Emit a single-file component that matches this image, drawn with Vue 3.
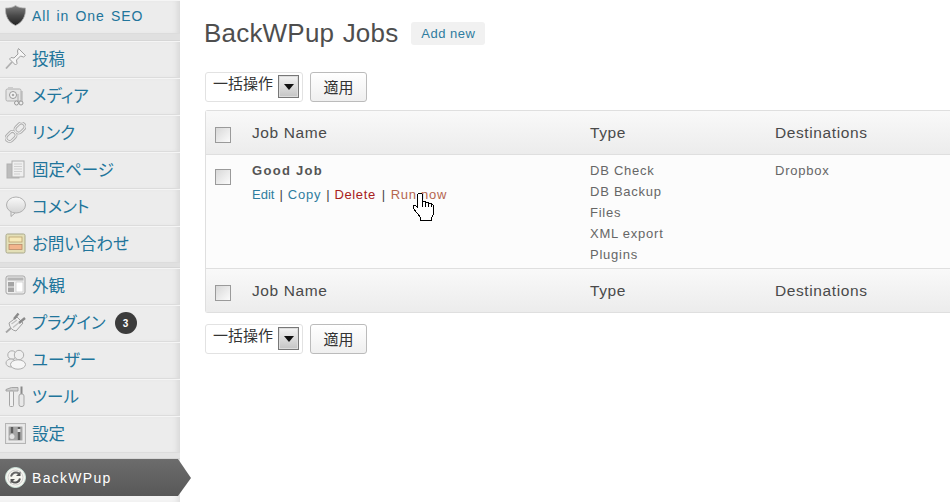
<script setup>
const shield = `<defs><linearGradient id="sg" x1="0" y1="0" x2="0" y2="1"><stop offset="0" stop-color="#808080"/><stop offset=".5" stop-color="#4a4a4a"/><stop offset="1" stop-color="#222"/></linearGradient></defs><path d="M10.5 .5 C13 2.500 17 3 20.500 3 C21 11 17.500 17.500 10.500 20.500 C3.500 17.500 0 11 .5 3 C4 3 8 2.500 10.500 .5Z" fill="url(#sg)" stroke="#b5b5b5" stroke-width=".8"/>`
const icons = {
  pin: `<path d="M13.500 .5 L20.500 7.500 L18.500 9 L15.500 8 L11.500 12 L12 15.500 L10.500 17 L4.500 11 L6 9.500 L9 10 L13 6 L12.500 3Z" fill="#f6f6f6" stroke="#a0a0a0"/><path d="M7 14 L1 20.500" stroke="#b0b0b0" stroke-width="1.800"/>`,
  media: `<rect x="1" y="4" width="15" height="12" rx="1.500" fill="#e4e4e4" stroke="#b0b0b0"/><rect x="3" y="2" width="5" height="2" fill="#ccc"/><circle cx="8" cy="10" r="3.500" fill="#f4f4f4" stroke="#999"/><circle cx="8" cy="10" r="1.300" fill="#aaa"/><path d="M17 6 V17 M13 9 L13 18" stroke="#aaa"/><circle cx="11.500" cy="18" r="2" fill="#eee" stroke="#999"/><circle cx="16" cy="18" r="2" fill="#eee" stroke="#999"/>`,
  link: `<g fill="none" stroke="#aeaeae" stroke-width="3"><rect x="9.500" y="2.500" width="11" height="7" rx="3.400" transform="rotate(-45 15 6)"/><rect x=".5" y="11" width="11" height="7" rx="3.400" transform="rotate(-45 6 14.500)"/></g><g fill="none" stroke="#f2f2f2"><rect x="9.500" y="2.500" width="11" height="7" rx="3.400" transform="rotate(-45 15 6)"/><rect x=".5" y="11" width="11" height="7" rx="3.400" transform="rotate(-45 6 14.500)"/></g>`,
  page: `<rect x="2" y="5" width="12" height="14" fill="#bcbcbc" stroke="#b0b0b0"/><rect x="7" y="2" width="12" height="16" fill="#efefef" stroke="#b0b0b0"/><path d="M9 5h8M9 7.500h8M9 10h8M9 12.500h8M9 15h6" stroke="#cfcfcf"/>`,
  comment: `<defs><linearGradient id="cg" x1="0" y1="0" x2="0" y2="1"><stop offset="0" stop-color="#fafafa"/><stop offset="1" stop-color="#d4d4d4"/></linearGradient></defs><path d="M6 15.500 L6 20.500 L10.500 16.500" fill="#ececec" stroke="#a8a8a8"/><ellipse cx="11" cy="9" rx="9.500" ry="8" fill="url(#cg)" stroke="#b0b0b0"/>`,
  form: `<rect x="1" y="1" width="19" height="19" rx="1.500" fill="#e4e0b8" stroke="#a8a88c"/><rect x="4" y="4" width="13" height="5" fill="#f6e9b8" stroke="#b8a070" stroke-width=".8"/><rect x="4" y="11.500" width="13" height="5" fill="#f2b48c" stroke="#b88a6a" stroke-width=".8"/>`,
  look: `<rect x="1" y="1" width="19" height="18" rx="2" fill="#efefef" stroke="#a5a5a5"/><rect x="2.500" y="2.500" width="16" height="3" fill="#b5b5b5"/><rect x="3" y="7" width="6" height="4.500" fill="#a5a5a5"/><rect x="3" y="12.500" width="6" height="4.500" fill="#a5a5a5"/><rect x="11" y="7" width="7" height="10" fill="#fff" stroke="#c0c0c0" stroke-width=".6"/>`,
  plugin: `<path d="M1 20.500 L6 16" stroke="#a5a5a5" stroke-width="1.800"/><path d="M4 11 L12 5 L18 11 L11 19 Q5 18 4 11Z" fill="#f0f0f0" stroke="#a0a0a0"/><path d="M9 7 L13.500 1.500 M14 11 L20 6" stroke="#8a8a8a" stroke-width="2.400"/><path d="M6.500 12 L12 8 M8 15.500 L14 10.500" stroke="#c0c0c0" stroke-width="1.400"/>`,
  users: `<circle cx="7" cy="6" r="4.200" fill="#efefef" stroke="#adadad"/><circle cx="14" cy="6" r="4.700" fill="#efefef" stroke="#adadad"/><ellipse cx="6" cy="14" rx="5" ry="4" fill="#eee" stroke="#adadad"/><ellipse cx="13" cy="15.500" rx="7.500" ry="4.700" fill="#f6f6f6" stroke="#adadad"/>`,
  tools: `<path d="M1 3.500 Q6 .5 13 1.500 V5 H8.500 H1Z" fill="#cfcfcf" stroke="#a5a5a5"/><rect x="4.500" y="5" width="4" height="15.500" rx="1" fill="#f0f0f0" stroke="#a5a5a5"/><path d="M16.500 .5 V8" stroke="#8a8a8a" stroke-width="2"/><rect x="14" y="8" width="5" height="12.500" rx="2" fill="#e8e8e8" stroke="#a5a5a5"/>`,
  settings: `<rect x=".5" y=".5" width="20" height="20" fill="#e4e4e4" stroke="#b5b5b5"/><rect x="3" y="3" width="15" height="15" fill="#a5a5a5" stroke="#f2f2f2"/><path d="M7 4 V10 M14 4 V17" stroke="#5c5c5c" stroke-width="2.400"/><circle cx="7" cy="13.500" r="2.500" fill="#e2e2e2"/><rect x="12.500" y="6" width="3" height="3" fill="#e2e2e2"/>`,
  backwpup: `<circle cx="10.500" cy="10.500" r="10" fill="#f6f6f0" stroke="#cfe6dd"/><circle cx="10.500" cy="10.500" r="7.500" fill="none" stroke="#d0d0d0"/><path d="M6 9.500 A5 5 0 0 1 14 6.500" fill="none" stroke="#666" stroke-width="2"/><path d="M15.500 4.500 L15.500 9 L11 9Z" fill="#555"/><path d="M15 11.500 A5 5 0 0 1 7 14.500" fill="none" stroke="#555" stroke-width="2"/><path d="M5.500 16.500 L5.500 12 L10 12Z" fill="#555"/>`,
}
const groups = [
  { items: [{ label: 'All in One SEO', latin: true, svg: shield, short: true }], sep: 'sep7' },
  { items: [
    { label: '投稿', svg: icons.pin }, { label: 'メディア', svg: icons.media }, { label: 'リンク', svg: icons.link },
    { label: '固定ページ', svg: icons.page }, { label: 'コメント', svg: icons.comment }, { label: 'お問い合わせ', svg: icons.form },
  ], sep: 'sep5' },
  { items: [
    { label: '外観', svg: icons.look }, { label: 'プラグイン', svg: icons.plugin, badge: 3 }, { label: 'ユーザー', svg: icons.users },
    { label: 'ツール', svg: icons.tools }, { label: '設定', svg: icons.settings },
  ], sep: 'sep6' },
]
const types = ['DB Check', 'DB Backup', 'Files', 'XML export', 'Plugins']
</script>

<template>
  <div class="page">
    <aside class="side">
      <template v-for="(g, i) in groups" :key="i">
        <div v-for="it in g.items" :key="it.label" class="item" :class="{ short: it.short }">
          <svg class="ico" width="21" height="21" viewBox="0 0 21 21" v-html="it.svg"></svg>
          <span class="lbl" :class="{ latin: it.latin }">{{ it.label }}</span>
          <span v-if="it.badge" class="badge">{{ it.badge }}</span>
        </div>
        <div class="sep" :class="g.sep"></div>
      </template>
      <div class="active">
        <svg class="ico" width="21" height="21" viewBox="0 0 21 21" v-html="icons.backwpup"></svg>
        <span class="lbl latin">BackWPup</span>
      </div>
    </aside>

    <main class="main">
      <header class="head">
        <h1>BackWPup Jobs</h1>
        <a class="add">Add new</a>
      </header>

      <div class="bar">
        <div class="select"><span>一括操作</span><i class="drop"></i></div>
        <button class="apply"><span>適用</span></button>
      </div>

      <div class="table">
        <div class="row hd">
          <span class="cb"></span><span>Job Name</span><span>Type</span><span>Destinations</span>
        </div>
        <div class="row body">
          <span class="cb cb-body"></span>
          <div class="job">
            <strong>Good Job</strong>
            <div class="acts">
              <a class="lnk e1">Edit</a><b>|</b><a class="lnk">Copy</a><b>|</b><a class="del">Delete</a><b class="wide">|</b><a class="run">Run now</a>
              <svg class="hand" width="23" height="30" viewBox="0 0 23 30">
                <path d="M6.500 1.500 H9.500 L10.500 2.500 V9.500 H13.500 V10.500 H16.500 V11.500 H19.500 L21.500 13.500 V22.500 L19.500 25.500 V28.500 H8.500 V25.500 L1.500 16.500 V13.500 H3.500 L5.500 15.500 V2.500Z" fill="#fff" stroke="#000" shape-rendering="crispEdges"/>
                <path d="M10.500 10 V15 M13.500 11 V15 M16.500 12 V15 M19.500 12 V15" stroke="#000" shape-rendering="crispEdges"/>
              </svg>
            </div>
          </div>
          <div class="types"><div v-for="t in types" :key="t">{{ t }}</div></div>
          <div class="types">Dropbox</div>
        </div>
        <div class="row hd ft">
          <span class="cb"></span><span>Job Name</span><span>Type</span><span>Destinations</span>
        </div>
      </div>

      <div class="bar bar2">
        <div class="select"><span>一括操作</span><i class="drop"></i></div>
        <button class="apply"><span>適用</span></button>
      </div>
    </main>
  </div>
</template>

<style>
html, body { margin: 0; overflow: hidden; background: #fff; }
</style>

<style scoped>
.page { display: flex; width: 950px; height: 502px; overflow: hidden; font-family: "Liberation Sans", "Noto Sans CJK JP", sans-serif; color: #333; }
.side { width: 180px; flex: none; background: #f4f4f4; box-shadow: inset -6px 0 6px -4px rgba(0,0,0,.1); display: flex; flex-direction: column; }
.item { height: 37px; flex: none; box-sizing: border-box; display: flex; align-items: center; padding-left: 5px; background: #ececec; border-top: 1px solid #f5f5f5; border-bottom: 1px solid #dcdcdc; box-shadow: inset -6px 0 6px -4px rgba(0,0,0,.1); }
.item.short { height: 34px; }
.ico { flex: none; width: 21px; height: 21px; }
.item .ico { margin-bottom: 3px; }
.lbl { margin-left: 6px; font-size: 16.500px; color: #21759b; font-feature-settings: "palt"; white-space: nowrap; }
.item .lbl { margin-bottom: 4px; }
.item .lbl.latin { margin-bottom: 2px; }
.lbl.latin { font-size: 14px; letter-spacing: .9px; word-spacing: 1.500px; }
.active .lbl.latin { letter-spacing: 1.300px; }
.badge { margin: 0 0 1px 9px; width: 22px; height: 22px; border-radius: 50%; background: #3c3c3c; color: #fff; font-size: 10px; font-weight: 700; display: flex; align-items: center; justify-content: center; }
.sep { flex: none; background: #e0e0e0; border-bottom: 1px solid #d6d6d6; box-sizing: border-box; }
.sep7 { height: 7px; }
.sep5 { height: 5px; }
.sep6 { height: 6px; background: #e4e4e4; }
.active { width: 191px; height: 37px; flex: none; display: flex; align-items: center; padding-left: 5px; box-sizing: border-box; background: linear-gradient(#6c6c6c, #585858); clip-path: polygon(0 0, 178px 0, 191px 19px, 178px 37px, 0 37px); z-index: 1; }
.active .lbl { color: #fff; }

.main { flex: 1; min-width: 0; padding-left: 25px; overflow: hidden; }
.head { display: flex; align-items: center; height: 46px; margin-top: 10px; }
h1 { margin: 0 0 0 -1px; font-size: 26px; font-weight: 400; color: #4e4e4e; letter-spacing: .2px; word-spacing: 1px; white-space: nowrap; line-height: 46px; }
.add { margin-left: 13px; height: 23px; line-height: 23px; padding: 0 10px; background: #f1f1f1; border-radius: 3px; font-size: 13px; color: #2f7c9f; letter-spacing: .5px; }
.bar { display: flex; gap: 7px; margin-top: 16px; height: 30px; }
.bar2 { margin-top: 11px; }
.select { width: 98px; box-sizing: border-box; border: 1px solid #e2e2e2; border-radius: 3px; background: #fff; display: flex; padding-left: 7px; font-size: 15px; line-height: 22px; gap: 5px; color: #333; }
.select span { white-space: nowrap; }
.drop { position: relative; flex: none; width: 21px; height: 23px; margin-top: 2px; box-sizing: border-box; border: 1px solid #777; outline: 1px solid #ddd; outline-offset: -2px; background: linear-gradient(#f4f4f4, #c4c4c4); }
.drop::after { content: ""; position: absolute; left: 5px; top: 8px; border: 5px solid transparent; border-top: 6px solid #111; border-bottom: 0; }
.apply { width: 57px; padding: 0 0 2px; border: 1px solid #bbb; border-radius: 3px; background: linear-gradient(#fff, #efefef); font: inherit; font-size: 15px; color: #333; }
.table { margin-top: 8px; width: 800px; border: 1px solid #dfdfdf; border-right: 0; border-radius: 3px 0 0 3px; }
.row { display: grid; grid-template-columns: 46px 338px 185px 1fr; }
.hd { height: 43px; align-items: center; background: linear-gradient(#f9f9f9, #ececec); font-size: 15.500px; color: #4a4a4a; letter-spacing: .6px; }
.ft { border-top: 1px solid #dfdfdf; }
.body { height: 113px; border-top: 1px solid #dfdfdf; background: #fcfcfc; font-size: 13px; color: #666; letter-spacing: .75px; }
.cb { width: 16px; height: 16px; margin: 4px 0 0 9px; box-sizing: border-box; border: 1px solid #9a9a9a; background: linear-gradient(135deg, #d8d8d8, #fbfbfb); }
.cb-body { margin-top: 14px; }
.job { padding-top: 5px; line-height: 21px; }
.job strong { display: block; color: #555; font-weight: 700; letter-spacing: 1.300px; }
.acts { position: relative; display: flex; margin-top: 3px; white-space: nowrap; }
.acts b { font-weight: 400; color: #444; margin: 0 5px; letter-spacing: 0; }
.acts b.wide { margin: 0 5.500px 0 6px; }
.lnk { color: #2f7c9f; }
.e1 { letter-spacing: 0; }
.del { color: #a82020; letter-spacing: .6px; }
.run { color: #b5664f; }
.hand { position: absolute; left: 160px; top: 8px; }
.types { padding-top: 5px; line-height: 21px; color: #666; }
</style>
